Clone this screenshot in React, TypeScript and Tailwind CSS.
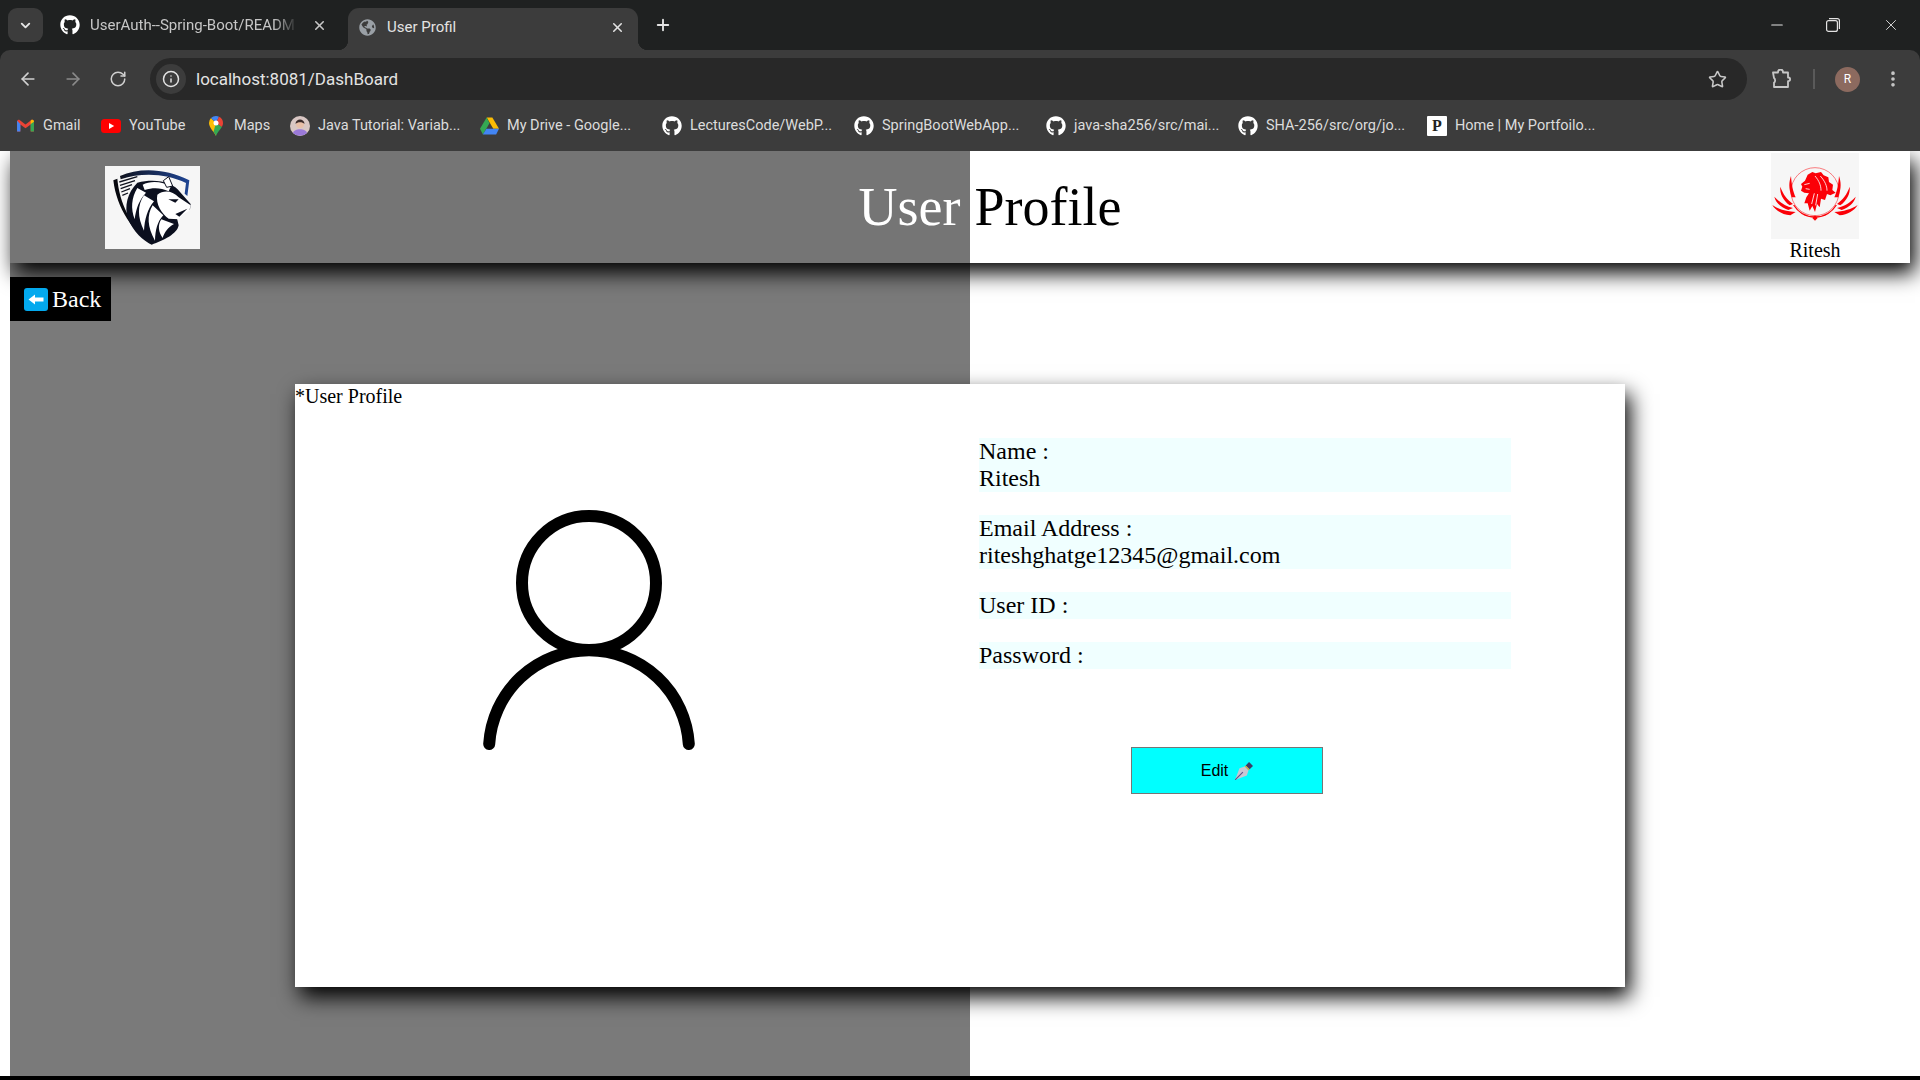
import { FaGithub, FaGlobeAmericas } from "react-icons/fa";
import { ArrowLeft, ArrowRight, RotateCw, ChevronDown, X, Plus, Info, Star, Minus, EllipsisVertical } from "lucide-react";

const ui = "font-['Roboto',sans-serif]";

function Gmail() {
  return (
    <svg viewBox="0 0 20 16" className="h-[15px] w-[19px]">
      <path d="M1 3v11.5h3.5V7L10 11l5.5-4v7.5H19V3l-2-1.500L10 7 3 1.500z" fill="#ea4335" />
      <path d="M1 3v11.5h3.5V6.500z" fill="#4285f4" />
      <path d="M19 3v11.5h-3.500V6.500z" fill="#34a853" />
      <path d="M15.500 6.500 19 4V3l-2-1.500-1.500 1.100z" fill="#fbbc04" />
    </svg>
  );
}

function YouTube() {
  return (
    <svg viewBox="0 0 20 14" className="h-[14px] w-[20px]">
      <rect width="20" height="14" rx="3.500" fill="#f00" />
      <path d="M8 4l5.200 3L8 10z" fill="#fff" />
    </svg>
  );
}

function Maps() {
  return (
    <svg viewBox="0 0 14 20" className="h-[20px] w-[14px]">
      <path d="M7 20C5.500 16 0 12 0 7a7 7 0 0 1 2-4.900L7 7z" fill="#fbbc04" />
      <path d="M2 2.100A7 7 0 0 1 7 0a7 7 0 0 1 3 .7L7 7z" fill="#4285f4" />
      <path d="M10 .7A7 7 0 0 1 14 7c0 1.500-.5 2.800-1.200 4L7 7z" fill="#ea4335" />
      <path d="M12.800 11C11 14 8.200 16.500 7 20 6.500 18.500 5.500 17 4.500 15.700L7 7z" fill="#34a853" />
      <circle cx="7" cy="7" r="2.500" fill="#fff" />
    </svg>
  );
}

function JavaAvatar() {
  return (
    <svg viewBox="0 0 20 20" className="h-[20px] w-[20px]">
      <circle cx="10" cy="10" r="10" fill="#d9c7c4" />
      <path d="M3 17c1-5 13-5 14 0a10 10 0 0 1-14 0z" fill="#9a79d8" />
      <circle cx="10" cy="8" r="4" fill="#e8bfa8" />
      <path d="M5.500 8c0-6 9-6 9 0-2-2.500-7-2.500-9 0z" fill="#3a2b2b" />
    </svg>
  );
}

function Drive() {
  return (
    <svg viewBox="0 0 20 18" className="h-[18px] w-[19px]">
      <path d="M7 0h6l7 12h-6z" fill="#fbbc04" />
      <path d="M7 0 0 12l3 6 7-12z" fill="#34a853" />
      <path d="M6.700 12H20l-3 6H3z" fill="#4285f4" />
    </svg>
  );
}

function PortfolioIcon() {
  return (
    <span className="flex h-[20px] w-[20px] items-center justify-center rounded-[1px] bg-white font-['Liberation_Serif',serif] text-[16px] font-bold leading-none text-[#222]">
      P
    </span>
  );
}

function Bookmark({ w, icon, text }: { w: string; icon: React.ReactNode; text: string }) {
  return (
    <div className={`flex shrink-0 items-center ${w}`}>
      <span className="flex w-[20px] shrink-0 justify-center">{icon}</span>
      <span className="ml-[8px] whitespace-nowrap text-[14.500px] text-[#dcdcdc]">{text}</span>
    </div>
  );
}

function Git() {
  return <FaGithub className="h-[20px] w-[20px] text-white" />;
}

function ChromeBar() {
  return (
    <div className={`${ui} h-[151px] shrink-0 bg-[#1f2121]`}>
      <div className="flex h-[50px] items-end pl-[8px]">
        <div className="mb-[8px] flex h-[34px] w-[35px] items-center justify-center rounded-[9px] bg-[#3c3c3c]">
          <ChevronDown size={15} strokeWidth={3} className="text-[#e6e6e6]" />
        </div>
        <div className="mb-[8px] ml-[17px] flex h-[34px] w-[288px] items-center">
          <FaGithub className="h-[20px] w-[20px] text-white" />
          <span className="ml-[10px] w-[208px] overflow-hidden whitespace-nowrap text-[15px] text-[#c7c7c7] [mask-image:linear-gradient(to_right,black_88%,transparent)]">
            UserAuth--Spring-Boot/READM
          </span>
          <X size={15} strokeWidth={2.5} className="ml-[14px] text-[#c7c7c7]" />
        </div>
        <div className="relative flex h-[42px] w-[290px] items-center rounded-t-[11px] bg-[#3c3c3c] pb-[4px] pl-[11px]">
          <span className="absolute bottom-0 left-[-10px] h-[10px] w-[10px] bg-[radial-gradient(circle_at_0_0,transparent_10px,#3c3c3c_10.500px)]" />
          <span className="absolute bottom-0 right-[-10px] h-[10px] w-[10px] bg-[radial-gradient(circle_at_100%_0,transparent_10px,#3c3c3c_10.500px)]" />
          <FaGlobeAmericas className="h-[17px] w-[17px] text-[#9aa0a6]" />
          <span className="ml-[11px] w-[223px] whitespace-nowrap text-[15px] text-[#e3e3e3]">User Profil</span>
          <X size={15} strokeWidth={2.5} className="text-[#e3e3e3]" />
        </div>
        <Plus size={18} strokeWidth={2.5} className="mb-[16px] ml-[16px] text-[#e3e3e3]" />
        <div className="mb-[13px] ml-auto flex h-[24px] items-center text-[#e3e3e3]">
          <Minus size={18} strokeWidth={1.5} className="mr-[40px]" />
          <svg viewBox="0 0 14 14" className="mr-[42px] h-[14px] w-[14px]" fill="none" stroke="currentColor" strokeWidth="1.200">
            <rect x="0.600" y="2.600" width="10.800" height="10.800" rx="2" />
            <path d="M3 .6h8.400a2 2 0 0 1 2 2V11" />
          </svg>
          <X size={18} strokeWidth={1.200} className="mr-[20px]" />
        </div>
      </div>
      <div className="rounded-t-[10px] bg-[#3c3c3c]">
        <div className="flex h-[50px] items-end">
          <div className="flex h-[42px] w-[150px] items-center text-[#d0d0d0]">
            <ArrowLeft size={20} strokeWidth={2} className="ml-[18px]" />
            <ArrowRight size={20} strokeWidth={2} className="ml-[25px] text-[#8a8a8a]" />
            <RotateCw size={18} strokeWidth={2} className="ml-[26px]" />
          </div>
          <div className="flex h-[42px] w-[1597px] items-center rounded-full bg-[#282828] pl-[6px]">
            <div className="flex h-[30px] w-[30px] items-center justify-center rounded-full bg-[#3c3c3c]">
              <Info size={18} strokeWidth={2} className="text-[#e3e3e3]" />
            </div>
            <span className="ml-[10px] pt-[2px] text-[17px] text-[#e3e3e3]">localhost:8081/DashBoard</span>
            <Star size={19} strokeWidth={2} className="ml-auto mr-[20px] text-[#c7c7c7]" />
          </div>
          <div className="flex h-[42px] flex-1 items-center text-[#c7c7c7]">
            <svg viewBox="0 0 20 20" className="ml-[24px] h-[20px] w-[20px]" fill="none" stroke="currentColor" strokeWidth="1.800" strokeLinejoin="round">
              <path d="M2 3.500h5V3a2.500 2.500 0 0 1 5 0v.5h5v5h.3a1.800 1.800 0 0 1 0 3.600H17V18H3v-4.500c1.500-.5 1.500-3.500 0-4.500z" />
            </svg>
            <span className="ml-[22px] h-[20px] w-[2px] bg-[#5a5a5a]" />
            <span className="ml-[20px] flex h-[25px] w-[25px] items-center justify-center rounded-full bg-[#8c6a5f] text-[12px] text-white">R</span>
            <EllipsisVertical size={20} strokeWidth={2.400} className="ml-[23px]" />
          </div>
        </div>
        <div className="flex h-[51px] items-center pl-[15px]">
          <Bookmark w="w-[86px]" icon={<Gmail />} text="Gmail" />
          <Bookmark w="w-[105px]" icon={<YouTube />} text="YouTube" />
          <Bookmark w="w-[84px]" icon={<Maps />} text="Maps" />
          <Bookmark w="w-[189px]" icon={<JavaAvatar />} text="Java Tutorial: Variab..." />
          <Bookmark w="w-[183px]" icon={<Drive />} text="My Drive - Google..." />
          <Bookmark w="w-[192px]" icon={<Git />} text="LecturesCode/WebP..." />
          <Bookmark w="w-[192px]" icon={<Git />} text="SpringBootWebApp..." />
          <Bookmark w="w-[192px]" icon={<Git />} text="java-sha256/src/mai..." />
          <Bookmark w="w-[189px]" icon={<Git />} text="SHA-256/src/org/jo..." />
          <Bookmark w="w-[190px]" icon={<PortfolioIcon />} text="Home | My Portfoilo..." />
        </div>
      </div>
    </div>
  );
}

function LionShield() {
  return (
    <svg viewBox="15 12 285 249" className="h-[83px] w-[95px] shrink-0 bg-[#f6f6f6]">
      <defs>
        <linearGradient id="band" x1="0" x2="1" y1="0" y2="0">
          <stop offset="0" stopColor="#10131f" />
          <stop offset="1" stopColor="#1f4594" />
        </linearGradient>
      </defs>
      <path d="M40 55 52 50C58 120 90 190 155 248 100 210 50 140 40 55Z" fill="#08090f" />
      <path d="M60 42C120 15 200 20 268 55L262 102 254 95 258 63C200 36 130 30 62 52Z" fill="url(#band)" />
      <path d="M58 60 112 44M60 70 105 56M62 80 96 68M64 90 90 80M67 100 84 93" stroke="#10131f" strokeWidth="4" />
      <path d="M112 62C82 92 72 132 84 170 100 210 130 235 155 248 190 236 232 216 236 190L230 165 270 142 272 126 240 90C220 62 170 48 112 62Z" fill="#0b0f1e" />
      <path d="M112 78C94 108 92 140 104 172 108 140 116 116 138 92Z" fill="#fff" />
      <path d="M132 100C112 130 112 165 132 206 134 172 142 142 162 118Z" fill="#fff" />
      <path d="M158 130C140 160 142 195 165 236 166 205 172 178 190 160Z" fill="#fff" />
      <path d="M184 172C172 190 176 212 188 228 194 210 204 196 222 186Z" fill="#fff" />
      <path d="M128 68C150 56 190 58 212 74L206 88C182 76 158 76 134 84Z" fill="#fff" />
      <path d="M172 98C190 84 216 84 236 106L272 130 268 146 246 160 236 172 206 170C186 156 166 126 172 98Z" fill="#fff" />
      <path d="M205 112 236 112 226 122ZM226 156 262 140 250 152 238 164Z" fill="#0b0f1e" />
      <path d="M190 56 206 44 218 72 200 76Z" fill="#fff" stroke="#0b0f1e" strokeWidth="3" />
    </svg>
  );
}

function LionRed() {
  const wing = (
    <g fill="#fb0007">
      <path d="M80 142C70 112 72 96 78 78 80 105 84 125 92 142Z" />
      <path d="M74 166C54 150 44 132 46 110 55 135 66 148 84 162Z" />
      <path d="M70 180C48 172 32 158 28 140 45 158 60 168 84 174Z" />
      <path d="M76 196C52 194 32 182 22 165 40 178 65 184 92 186Z" />
    </g>
  );
  return (
    <svg viewBox="18 9 264 258" className="h-[86px] w-[88px] bg-[#f6f6f6]">
      <circle cx="150" cy="125" r="72" fill="none" stroke="#fb0007" strokeWidth="1.500" />
      <path d="M86 165A75 75 0 0 0 214 165" fill="none" stroke="#fb0007" strokeWidth="4" />
      <path d="M150 196 158 204 150 212 142 204Z" fill="#fb0007" />
      {wing}
      <g transform="translate(300 0) scale(-1 1)">{wing}</g>
      <path d="M128 74 142 66 152 70 168 66 176 76 190 82 192 96 204 104 202 120 212 128 196 136 186 132 180 150 168 146 164 172 156 162 150 186 142 168 134 182 128 160 118 160 124 142 132 130 118 128 108 122 112 110 108 102 120 92Z" fill="#fb0007" />
      <path d="M118 104 134 100M150 78C162 92 168 106 168 122M166 78C180 94 186 108 186 122M148 130 140 162M158 132 152 166M122 116 134 118" stroke="#fff" strokeWidth="2.500" fill="none" />
    </svg>
  );
}

function BackIcon() {
  return (
    <svg viewBox="0 0 24 23" className="h-[23px] w-[24px]">
      <rect width="24" height="23" rx="3" fill="#03a9ee" />
      <path d="M4.500 11.500 11 6.500v3h8.500v4H11v3z" fill="#fff" />
    </svg>
  );
}

function PenIcon() {
  return (
    <svg viewBox="0 0 16 16" className="ml-[7px] h-[18px] w-[18px]">
      <path d="M9.500 3 12.500 0 16 3.500 13 6.500z" fill="#3f3a66" />
      <path d="M8.500 4 9.500 3 13 6.500 12 7.500z" fill="#e0a33a" />
      <path d="M8.500 4 12 7.500 10.500 12 0 16 4 5.500z" fill="#c9c6d2" />
      <path d="M0 16 7 9" stroke="#5a4f8a" strokeWidth="1" />
    </svg>
  );
}

function PersonIcon() {
  return (
    <svg viewBox="0 0 212 246" className="h-[246px] w-[212px]" fill="none" stroke="#000" strokeWidth="12" strokeLinecap="round">
      <circle cx="106" cy="73" r="67" />
      <path d="M6.200 234A100 100 0 0 1 205.800 234" />
    </svg>
  );
}

function Field({ label, value }: { label: string; value?: string }) {
  return (
    <div className="bg-[#f0ffff] text-[24px] leading-[27px] text-black">
      <div className="whitespace-pre">{label} </div>
      {value && <div>{value}</div>}
    </div>
  );
}

export default function App() {
  return (
    <div className="flex h-screen flex-col overflow-hidden bg-black font-['Liberation_Serif',serif]">
      <ChromeBar />
      <div className="h-[925px] shrink-0 overflow-hidden bg-white pl-[10px]">
        <div className="h-full bg-[linear-gradient(to_right,#7a7a7a_960px,#fff_960px)]">
          <header className="flex h-[112px] w-[1900px] bg-[linear-gradient(to_right,#757575_960px,#fff_960px)] shadow-[5px_10px_20px_#000]">
            <div className="ml-[95px] flex items-center">
              <LionShield />
            </div>
            <h1 className="flex flex-1 items-center justify-center pl-[9px] text-[54px] font-normal">
              <span className="text-white">User</span>
              <span className="ml-[14px] text-black">Profile</span>
            </h1>
            <div className="mr-[51px] flex w-[88px] flex-col items-center pt-[2px]">
              <LionRed />
              <span className="text-[20px] leading-[23px] text-black">Ritesh</span>
            </div>
          </header>
          <button className="mt-[14px] flex h-[44px] w-[101px] items-center bg-black pl-[14px] text-[24px] text-white">
            <BackIcon />
            <span className="ml-[4px]">Back</span>
          </button>
          <section className="ml-[285px] mt-[63px] h-[603px] w-[1330px] bg-white shadow-[5px_10px_20px_#000]">
            <div className="pt-[1px] text-[20px] leading-[23px] text-black">*User Profile</div>
            <div className="flex">
              <div className="flex w-[588px] justify-center pt-[102px]">
                <PersonIcon />
              </div>
              <div className="ml-[96px] flex w-[532px] flex-col gap-[23px] pt-[30px]">
                <Field label="Name :" value="Ritesh" />
                <Field label="Email Address :" value="riteshghatge12345@gmail.com" />
                <Field label="User ID :" />
                <Field label="Password :" />
                <button className="ml-[152px] mt-[55px] flex h-[47px] w-[192px] items-center justify-center border border-[#767676] bg-[#00ffff] font-['Liberation_Sans',sans-serif] text-[16px] text-black">
                  Edit
                  <PenIcon />
                </button>
              </div>
            </div>
          </section>
        </div>
      </div>
    </div>
  );
}
